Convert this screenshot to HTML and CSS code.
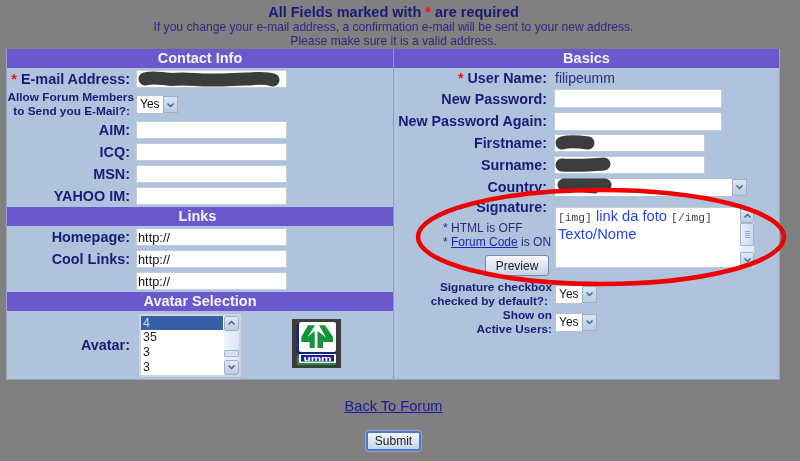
FILE: index.html
```html
<!DOCTYPE html>
<html lang="en">
<head>
<meta charset="utf-8">
<title>Profile</title>
<link rel="stylesheet" href="styles.css">
</head>
<body>
<div class="page">
  <header class="intro">
    <h1>All Fields marked with <span class="req">*</span> are required</h1>
    <p>If you change your e-mail address, a confirmation e-mail will be sent to your new address.</p>
    <p>Please make sure it is a valid address.</p>
  </header>

  <form class="panel">
    <section class="col col-left">
      <h2 class="bar">Contact Info</h2>
      <div class="row"><label class="lab"><span class="req">*</span> E-mail Address:</label>
        <span class="box w151"><svg class="scrib" width="149" height="18" viewBox="0 0 149 18"><path d="M8 9 C14 7 24 8 34 9.5 C50 8 58 10 72 10 C90 10.5 100 8.5 112 9 C122 8 130 8 136 10" fill="none" stroke="#3c3c3c" stroke-width="13" stroke-linecap="round"/></svg></span></div>
      <div class="row row-two"><label class="lab lab-small">Allow Forum Members<br><span class="line-in">to Send you E-Mail?:</span></label>
        <span class="sel"><span class="sel-val">Yes</span><span class="arrow"><svg width="9" height="6" viewBox="0 0 9 6"><path d="M1.5 1.5 L4.5 4.5 L7.5 1.5" fill="none" stroke="#4d6185" stroke-width="1.5"/></svg></span></span></div>
      <div class="row"><label class="lab">AIM:</label><span class="box w151"></span></div>
      <div class="row"><label class="lab">ICQ:</label><span class="box w151"></span></div>
      <div class="row"><label class="lab">MSN:</label><span class="box w151"></span></div>
      <div class="row"><label class="lab">YAHOO IM:</label><span class="box w151"></span></div>
      <h2 class="bar bar-links">Links</h2>
      <div class="row"><label class="lab">Homepage:</label><span class="box w151 val">http://</span></div>
      <div class="row"><label class="lab">Cool Links:</label><span class="box w151 val">http://</span></div>
      <div class="row"><span class="lab"></span><span class="box w151 val">http://</span></div>
      <h2 class="bar">Avatar Selection</h2>
      <div class="avatar-row">
        <label class="lab">Avatar:</label>
        <div class="listbox">
          <ul class="options">
            <li class="selected">4</li><li>35</li><li>3</li><li>3</li>
          </ul>
          <div class="vscroll">
            <span class="sbtn"><svg width="9" height="6" viewBox="0 0 9 6"><path d="M1.5 4.5 L4.5 1.5 L7.5 4.5" fill="none" stroke="#4d6185" stroke-width="1.5"/></svg></span>
            <span class="strack"><span class="sthumb"></span></span>
            <span class="sbtn"><svg width="9" height="6" viewBox="0 0 9 6"><path d="M1.5 1.5 L4.5 4.5 L7.5 1.5" fill="none" stroke="#4d6185" stroke-width="1.5"/></svg></span>
          </div>
        </div>
        <svg class="logo" width="49" height="49" viewBox="0 0 49 49">
          <rect width="49" height="49" fill="#3e3e3e"/>
          <rect x="4.5" y="4" width="39.5" height="31" rx="2" fill="#1b1f8a"/>
          <rect x="7" y="3" width="37" height="30" rx="2" fill="#fff"/>
          <path d="M16 6.3 L23 6.3 L15.5 18 L22.7 12 L22.7 29 L17.7 29 L17.7 23 L9.3 23 L9.3 18 Z" fill="#149438"/>
          <path d="M27 6.3 L33 6.3 L41 18 L41 23 L31 23 L31 29 L25.5 29 L25.5 12 L34 18.5 Z" fill="#149438"/>
          <rect x="5" y="36" width="39" height="10" rx="1" fill="#149438"/>
          <rect x="7" y="35" width="37" height="9" rx="1" fill="#fff"/>
          <rect x="9" y="36" width="33" height="6.5" fill="#1b1f8a"/>
          <text x="25.5" y="42.4" class="logo-text" text-anchor="middle" textLength="28" lengthAdjust="spacingAndGlyphs">umm</text>
        </svg>
      </div>
    </section>

    <section class="col col-right">
      <h2 class="bar">Basics</h2>
      <div class="rrow rrow-user"><label class="rlab"><span class="req">*</span> User Name:</label><span class="plain">filipeumm</span></div>
      <div class="rrow rrow-pass"><label class="rlab">New Password:</label><span class="box box-tall w169"></span></div>
      <div class="rrow"><label class="rlab">New Password Again:</label><span class="box box-tall w169"></span></div>
      <div class="rrow"><label class="rlab">Firstname:</label>
        <span class="box w151"><svg class="scrib" width="44" height="18" viewBox="0 0 44 18"><path d="M7 9 C14 7 26 8 33 9" fill="none" stroke="#3c3c3c" stroke-width="13" stroke-linecap="round"/></svg></span></div>
      <div class="rrow"><label class="rlab">Surname:</label>
        <span class="box w151"><svg class="scrib" width="60" height="18" viewBox="0 0 60 18"><path d="M7 9 C16 10 30 9 49 8" fill="none" stroke="#3c3c3c" stroke-width="13" stroke-linecap="round"/></svg></span></div>
      <div class="rrow"><label class="rlab">Country:</label>
        <span class="sel sel-country"><span class="sel-val"><svg class="scrib" width="60" height="18" viewBox="0 0 60 18"><path d="M9 7 L50 7" fill="none" stroke="#3c3c3c" stroke-width="13" stroke-linecap="round"/><path d="M30 11 L40 12" stroke="#3c3c3c" stroke-width="7" stroke-linecap="round"/></svg></span><span class="arrow"><svg width="9" height="6" viewBox="0 0 9 6"><path d="M1.5 1.5 L4.5 4.5 L7.5 1.5" fill="none" stroke="#4d6185" stroke-width="1.5"/></svg></span></span></div>
      <div class="sig-row">
        <div class="sig-side">
          <div class="sig-title">Signature:</div>
          <div class="sig-note">* HTML is OFF<br>* <a href="#">Forum Code</a> is ON</div>
          <button type="button" class="btn btn-preview">Preview</button>
        </div>
        <div class="textarea">
          <div class="ta-text"><code>[img]</code> link da foto <code>[/img]</code><br>Texto/Nome</div>
          <div class="vscroll vscroll-ta">
            <span class="sbtn"><svg width="9" height="6" viewBox="0 0 9 6"><path d="M1.5 4.5 L4.5 1.5 L7.5 4.5" fill="none" stroke="#4d6185" stroke-width="1.5"/></svg></span>
            <span class="strack"><span class="sthumb sthumb-grip"></span></span>
            <span class="sbtn"><svg width="9" height="6" viewBox="0 0 9 6"><path d="M1.5 1.5 L4.5 4.5 L7.5 1.5" fill="none" stroke="#4d6185" stroke-width="1.5"/></svg></span>
          </div>
        </div>
      </div>
      <div class="rrow rrow-two"><label class="rlab lab-small">Signature checkbox<br><span class="line-in">checked by default?:</span></label>
        <span class="sel"><span class="sel-val">Yes</span><span class="arrow"><svg width="9" height="6" viewBox="0 0 9 6"><path d="M1.5 1.5 L4.5 4.5 L7.5 1.5" fill="none" stroke="#4d6185" stroke-width="1.5"/></svg></span></span></div>
      <div class="rrow rrow-two"><label class="rlab lab-small">Show on<br>Active Users:</label>
        <span class="sel"><span class="sel-val">Yes</span><span class="arrow"><svg width="9" height="6" viewBox="0 0 9 6"><path d="M1.5 1.5 L4.5 4.5 L7.5 1.5" fill="none" stroke="#4d6185" stroke-width="1.5"/></svg></span></span></div>
    </section>
  </form>

  <footer class="foot">
    <a class="back" href="#">Back To Forum</a>
    <button type="button" class="btn btn-submit">Submit</button>
  </footer>

  <svg class="oval" width="800" height="461" viewBox="0 0 800 461">
    <ellipse cx="601" cy="237" rx="183" ry="47" fill="none" stroke="#f00000" stroke-width="4.5"/>
  </svg>
</div>
</body>
</html>
```
FILE: styles.css
```css
* { box-sizing: border-box; }
html, body { margin: 0; padding: 0; }
body {
  background: #808080;
  color: #1b1b77;
  font-family: "Liberation Sans", Arial, sans-serif;
}
.page { position: relative; width: 800px; height: 461px; overflow: hidden; filter: blur(0.4px); }

.intro { width: 787px; height: 49px; padding-top: 4px; text-align: center; }
.intro h1 { margin: 0; font-size: 14.5px; line-height: 16px; font-weight: bold; }
.intro p { margin: 0; font-size: 12.1px; line-height: 14px; color: #2e2a80; }
.req { color: #f01010; }

.panel {
  display: flex;
  width: 774px;
  height: 331px;
  margin-left: 6px;
  background: #afc3dd;
  border: 1px solid #9aa6b8;
  border-width: 0 1px 1px 1px;
}
.col-left { width: 387px; flex: none; border-right: 1px solid #8d9db5; }
.col-right { flex: 1; }
.bar {
  margin: 0;
  height: 19px;
  line-height: 19px;
  background: #6c58cd;
  color: #f4f4ff;
  font-size: 14.5px;
  font-weight: bold;
  text-align: center;
}
.bar-links { padding-right: 5px; }

.row { display: flex; height: 22px; align-items: center; }
.row-two { height: 29px; }
.lab {
  width: 123px;
  margin-right: 6px;
  flex: none;
  font-size: 14.4px;
  font-weight: bold;
  text-align: right;
  white-space: nowrap;
}
.row-two .lab { width: 127px; margin-right: 2px; padding-bottom: 1px; }
.lab-small { font-size: 11.8px; line-height: 14px; }
.line-in { padding-right: 4px; }

.box {
  display: block;
  position: relative;
  height: 18px;
  background: #fff;
  border: 1px solid #c4ccd6;
  border-radius: 1px;
  font-size: 12px;
  line-height: 17px;
  color: #111;
  padding-left: 1px;
}
.val { font-size: 12.8px; }
.box-tall { height: 19px; }
.w151 { width: 151px; }
.w169 { width: 168px; }
.scrib { position: absolute; left: 0; top: -1px; overflow: visible; }

.sel {
  display: flex;
  position: relative;
  height: 19px;
  width: 43px;
  background: #fff;
  border: 1px solid #b5c0d0;
  font-size: 12px;
}
.sel-val { flex: 1; position: relative; padding-left: 3px; line-height: 17px; color: #111; }
.arrow {
  width: 15px;
  display: flex;
  align-items: center;
  justify-content: center;
  background: linear-gradient(#dbe5f3, #b9c9e2);
  border: 1px solid #9fb0c9;
}
.sel-country { width: 194px; }

.avatar-row { display: flex; align-items: center; height: 68px; }
.listbox {
  display: flex;
  width: 102px;
  height: 63px;
  margin-left: 3px;
  background: #fff;
  border: 2px solid #cfd5de;
}
.options { list-style: none; margin: 0; padding: 0; flex: 1; font-size: 12.4px; color: #222; }
.options li { padding-left: 2px; height: 14.7px; line-height: 14.7px; }
.options li.selected { background: #3460a8; color: #cfd8e8; margin-right: 1px; }
.vscroll { width: 15px; flex: none; display: flex; flex-direction: column; background: #fff; }
.vscroll-ta { width: 14px; }
.sbtn {
  height: 15px;
  display: flex;
  align-items: center;
  justify-content: center;
  background: linear-gradient(#dfe8f5, #bccbe3);
  border: 1px solid #9fb0c9;
  border-radius: 2px;
  flex: none;
}
.strack { flex: 1; display: flex; flex-direction: column; justify-content: flex-end; background: linear-gradient(90deg, #eef4fc, #dbe6f6); }
.sthumb { display: block; height: 7px; background: #d5e1f3; border: 1px solid #a3b4cd; border-radius: 1px; margin-bottom: 3px; }
.sthumb-grip {
  height: 23px;
  margin: 0 0 auto;
  background:
    repeating-linear-gradient(#9fb0c9 0 1px, transparent 1px 2px) center / 5px 7px no-repeat,
    linear-gradient(90deg, #e6eefa, #c9d8ef);
}
.logo { margin-left: 51px; margin-top: -3px; flex: none; }
.logo-text { font-family: "Liberation Sans", Arial, sans-serif; font-size: 8px; font-weight: bold; fill: #fff; }

.rrow { display: flex; align-items: center; height: 22px; }
.rrow-user { height: 19px; }
.rrow-pass { height: 23px; }
.rlab {
  width: 153px;
  margin-right: 7px;
  flex: none;
  font-size: 14.3px;
  font-weight: bold;
  text-align: right;
  white-space: nowrap;
}
.rrow-two { height: 28px; }
.rrow-two .rlab { width: 158px; margin-right: 3px; font-size: 11.8px; }
.plain { font-size: 14px; color: #2e2a80; padding-left: 1px; }

.sig-row { display: flex; height: 82px; }
.sig-side { width: 161px; flex: none; text-align: right; padding-right: 6px; }
.sig-title { font-size: 14.3px; font-weight: bold; line-height: 18px; padding-right: 2px; }
.sig-note { font-size: 12px; line-height: 14px; text-align: left; padding-left: 49px; margin-top: 5px; white-space: nowrap; color: #2e2a80; }
.sig-note a { color: #1a2ab0; }
.btn {
  font-family: inherit;
  font-size: 12px;
  color: #222;
  background: linear-gradient(#f6f9fd, #c6d4e8);
  border: 1px solid #7389ab;
  border-radius: 3px;
  padding: 0;
}
.btn-preview { width: 64px; height: 21px; margin-top: 6px; }
.textarea { display: flex; width: 199px; height: 61px; margin-top: 9px; background: #fff; border: 1px solid #c4ccd6; border-right: 0; }
.ta-text { flex: 1; padding: 0 2px; font-size: 14.7px; line-height: 16px; color: #2a45ea; white-space: nowrap; }
.ta-text code { font-family: "Liberation Mono", monospace; font-size: 11.3px; color: #444; }

.foot { display: flex; flex-direction: column; align-items: center; width: 787px; padding-top: 18px; }
.back { font-size: 14.6px; color: #1a1a9a; }
.btn-submit { width: 55px; height: 20px; margin-top: 17px; border: 2px solid #4a78d0; outline: 1px solid #9aa5b5; }

.oval { position: absolute; left: 0; top: 0; pointer-events: none; }
```
